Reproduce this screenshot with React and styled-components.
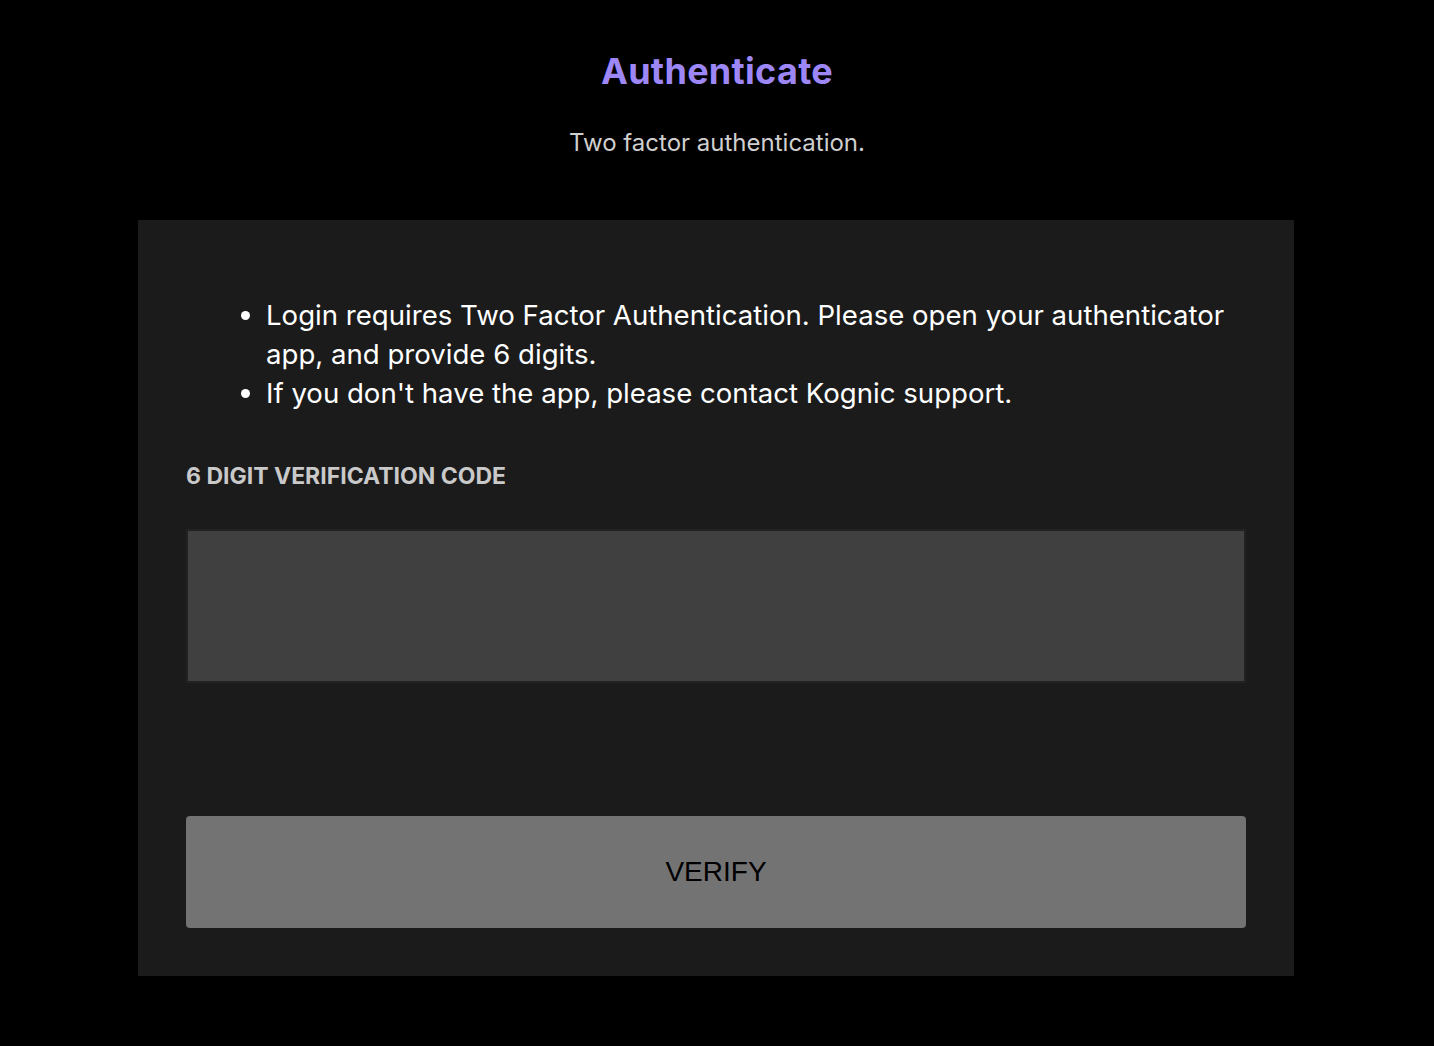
import React from "react";
import styled, { createGlobalStyle } from "styled-components";

const Global = createGlobalStyle`
  html, body { margin: 0; padding: 0; background: #000; }
  body { font-family: "Inter", "Noto Sans", sans-serif; color: #fff; }
  * { box-sizing: border-box; }
`;

const Page = styled.main`
  min-height: 1046px;
  display: flex;
  flex-direction: column;
  align-items: center;
  padding-top: 48px;
`;

const Title = styled.h1`
  margin: 0;
  font-size: 36px;
  line-height: 46px;
  font-weight: 700;
  color: #9d87f6;
  letter-spacing: 0.3px;
`;

const Subtitle = styled.p`
  margin: 35px 0 0;
  font-size: 24px;
  line-height: 28px;
  color: #cfcfcf;
`;

const Card = styled.section`
  margin-top: 63px;
  width: 1156px;
  margin-right: 2px;
  background: #1b1b1b;
  padding: 76px 48px 48px;
  display: flex;
  flex-direction: column;
`;

const List = styled.ul`
  margin: 0;
  padding-left: 80px;
  font-size: 27.6px;
  line-height: 39px;
  color: #fff;
`;

const Label = styled.label`
  margin-top: 48px;
  font-family: "Inter", sans-serif;
  font-weight: 700;
  font-size: 23px;
  line-height: 30px;
  color: #c9c9c9;
  letter-spacing: 0;
`;

const Input = styled.input`
  margin-top: 38px;
  height: 154px;
  width: 1060px;
  background: #404040;
  border: 2px solid #222;
  outline: none;
  color: #fff;
  font-size: 28px;
  padding: 0 20px;
`;

const Button = styled.button`
  margin-top: 133px;
  height: 112px;
  width: 1060px;
  border: none;
  border-radius: 4px;
  background: #737373;
  color: #000;
  font-family: "Liberation Sans", Arial, sans-serif;
  font-size: 28px;
  cursor: pointer;
`;

export default function App() {
  return (
    <>
      <Global />
      <Page>
        <Title>Authenticate</Title>
        <Subtitle>Two factor authentication.</Subtitle>
        <Card>
          <List>
            <li>Login requires Two Factor Authentication. Please open your authenticator app, and provide 6 digits.</li>
            <li>If you don't have the app, please contact Kognic support.</li>
          </List>
          <Label htmlFor="code">6 DIGIT VERIFICATION CODE</Label>
          <Input id="code" type="text" />
          <Button>VERIFY</Button>
        </Card>
      </Page>
    </>
  );
}
